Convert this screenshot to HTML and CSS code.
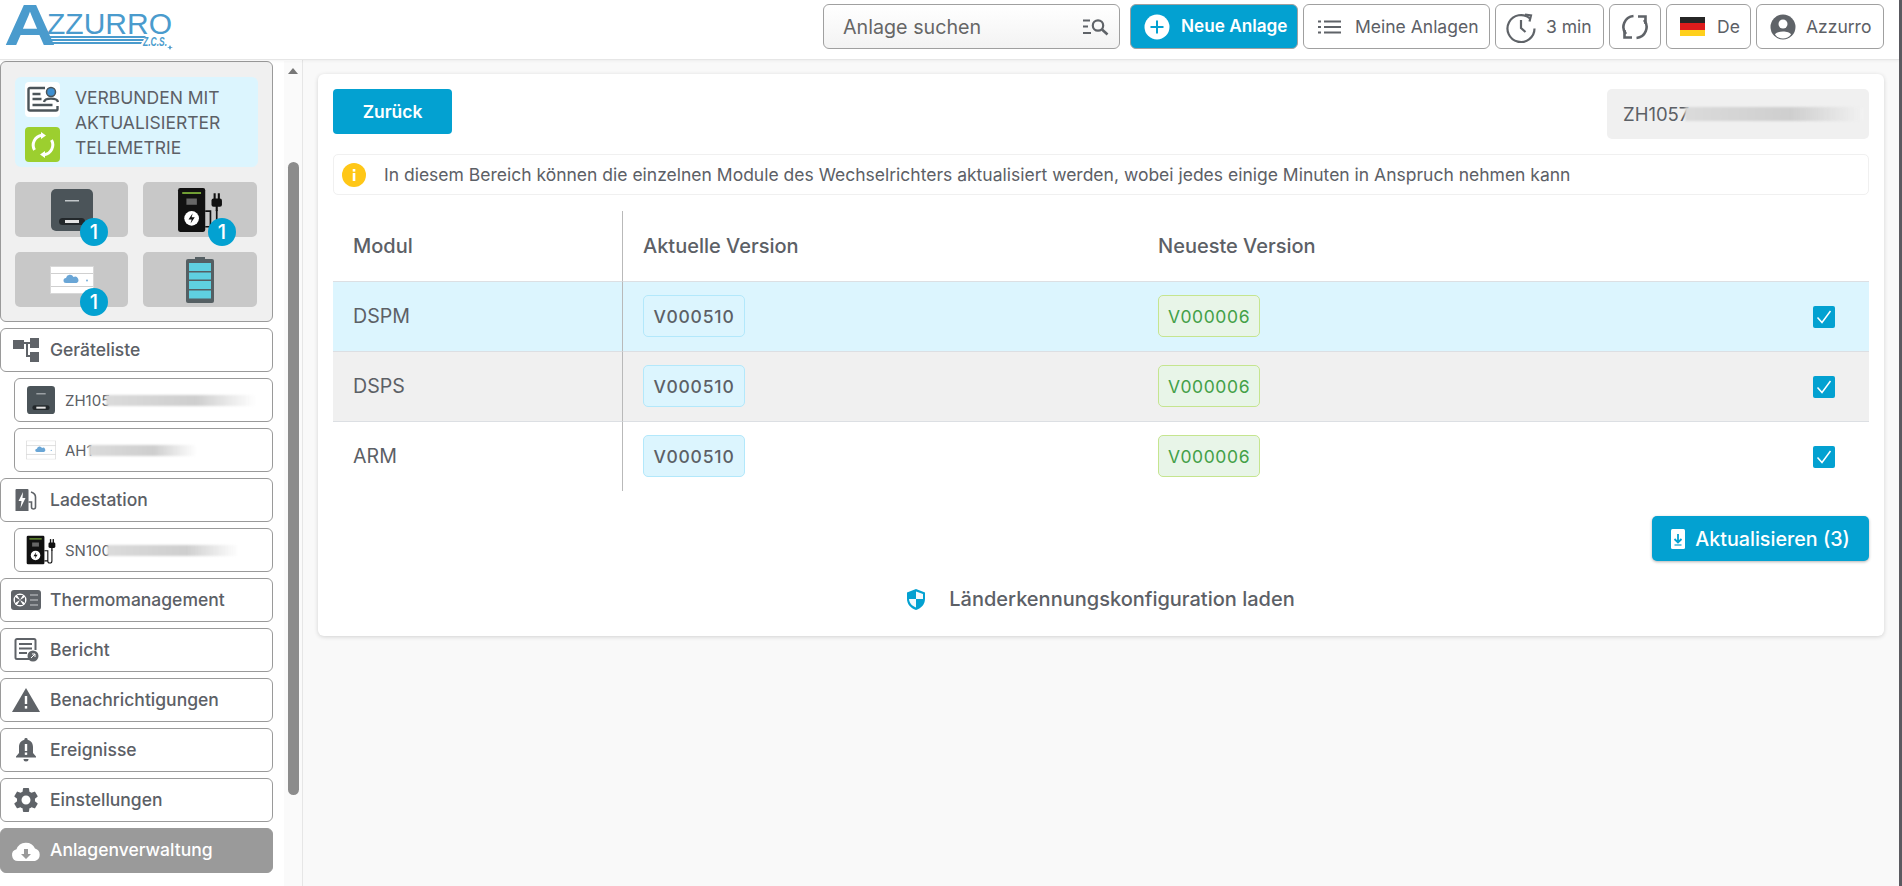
FILE: index.html
```html
<!DOCTYPE html>
<html lang="de">
<head>
    <meta charset="UTF-8">
    <meta name="viewport" content="width=device-width, initial-scale=1.0">
    <title>Azzurro - Anlagenverwaltung</title>
    <link rel="stylesheet" href="styles.css">
</head>
<body>
    <!-- shared device pictures -->
    <svg class="sprite" aria-hidden="true">
        <symbol id="dev-inverter" viewBox="0 0 42 42">
            <rect x="0" y="0" width="42" height="42" rx="5" fill="#4b5459"/>
            <rect x="14" y="11" width="14" height="1.500" fill="#c2c7ca"/>
            <rect x="8" y="29" width="26" height="7" rx="3.500" fill="#23282b"/>
            <rect x="14" y="31" width="14" height="3" fill="#e4e4e4"/>
        </symbol>
        <symbol id="dev-charger" viewBox="0 0 44 44">
            <rect x="1" y="1" width="26" height="42" rx="2" fill="#111"/>
            <rect x="5" y="5" width="18" height="1.500" fill="#8bc53f"/>
            <rect x="9" y="11" width="10" height="6" fill="#666"/>
            <circle cx="14" cy="30" r="7" fill="#fff"/>
            <polygon points="15,25 11,31 14,31 13,35 17,29 14,29" fill="#111"/>
            <path d="M27 23h5v15h-5M38 22v16a3 3 0 0 1-6 0" fill="none" stroke="#111" stroke-width="1.600"/>
            <rect x="33" y="11" width="10" height="8" rx="2" fill="#111"/>
            <rect x="35" y="6" width="2" height="6" fill="#111"/>
            <rect x="39" y="6" width="2" height="6" fill="#111"/>
            <rect x="37" y="18" width="2" height="5" fill="#111"/>
        </symbol>
        <symbol id="dev-box" viewBox="0 0 44 28">
            <rect x="0" y="0" width="44" height="28" fill="#fff"/>
            <path d="M0 7.500h44M0 20.500h44" stroke="#d0d0d0" stroke-width="1"/>
            <rect x=".5" y=".5" width="43" height="27" fill="none" stroke="#d8d8d8"/>
            <path d="M16 17a2.500 2.500 0 0 1 0-5 4 4 0 0 1 7.500-1 3 3 0 0 1 3 6z" fill="#6aa6d6"/>
            <circle cx="37" cy="14.500" r=".9" fill="#6aa6d6"/>
        </symbol>
    </svg>

    <div class="app">
        <header class="topbar">
            <svg class="logo" width="175" height="52" viewBox="0 0 175 52">
                <text class="logo-a" x="4" y="42" textLength="52" lengthAdjust="spacingAndGlyphs">A</text>
                <text class="logo-word" x="47" y="31" textLength="125" lengthAdjust="spacingAndGlyphs">ZZURRO</text>
                <polygon points="40,33 146,33 144,35 42,35" fill="#4a9bcd"/>
                <polygon points="46,36 144,36 143,38 47,38" fill="#4a9bcd"/>
                <polygon points="48,39 142,39 141,41 50,41" fill="#4a9bcd"/>
                <text class="logo-zcs" x="143" y="43" textLength="24" lengthAdjust="spacingAndGlyphs">Z.C.S.</text>
                <polygon points="170,42 171,44 173,44.500 171,45 170,47 169,45 167,44.500 169,44" fill="#4a9bcd"/>
            </svg>

            <div class="top-actions">
                <div class="search-box">
                    <span>Anlage suchen</span>
                    <svg width="26" height="18" viewBox="0 0 26 18"><path d="M0 2.500h7M0 8.500h5M0 15h8" stroke="#5f6368" stroke-width="2.200"/><circle cx="15" cy="7.500" r="5.200" fill="none" stroke="#5f6368" stroke-width="2.200"/><path d="M19 11.500l5.500 5" stroke="#5f6368" stroke-width="2.600"/></svg>
                </div>
                <button class="top-btn top-btn-primary">
                    <svg width="26" height="26" viewBox="0 0 26 26"><circle cx="13" cy="13" r="12.500" fill="#fff"/><path d="M13 6.500v13M6.500 13h13" stroke="#03a1d1" stroke-width="2"/></svg>
                    Neue Anlage
                </button>
                <button class="top-btn btn-plants">
                    <svg width="23" height="14" viewBox="0 0 23 14"><path d="M0 1.500h3M6 1.500h17M0 7h3M6 7h17M0 12.500h3M6 12.500h17" stroke="#5f6368" stroke-width="2"/></svg>
                    Meine Anlagen
                </button>
                <button class="top-btn btn-timer">
                    <svg width="30" height="32" viewBox="0 0 30 32"><path d="M24 7.500A13.500 13.500 0 1 0 28.500 17.500" fill="none" stroke="#5f6368" stroke-width="2.200"/><path d="M19 3.500l6 1-1.500 6" fill="none" stroke="#5f6368" stroke-width="2.200"/><path d="M15 9v8l4.500 4" fill="none" stroke="#5f6368" stroke-width="2.200"/></svg>
                    3 min
                </button>
                <button class="top-btn btn-sync">
                    <svg width="28" height="28" viewBox="0 0 28 28"><path d="M12.500 3A11 11 0 0 0 5 21M15.500 25A11 11 0 0 0 23 7" fill="none" stroke="#5f6368" stroke-width="2.600"/><path d="M3.500 17v7.500H11M24.500 11V3.500H17" fill="none" stroke="#5f6368" stroke-width="2.600"/></svg>
                </button>
                <button class="top-btn btn-lang">
                    <span class="flag"><i class="flag-black"></i><i class="flag-red"></i><i class="flag-gold"></i></span>
                    De
                </button>
                <button class="top-btn btn-user">
                    <svg width="26" height="26" viewBox="0 0 26 26"><circle cx="13" cy="13" r="12.500" fill="#5f6368"/><circle cx="13" cy="10" r="4.500" fill="#fff"/><path d="M5 20.500c1.500-4 14.500-4 16 0a10 10 0 0 1-16 0z" fill="#fff"/></svg>
                    Azzurro
                </button>
            </div>
        </header>

        <div class="layout">
            <aside class="sidebar">
                <nav class="side-col">
                    <section class="status-panel">
                        <div class="status-note">
                            <div class="status-icons">
                                <span class="status-icon status-icon-white">
                                    <svg width="32" height="30" viewBox="0 0 32 30"><path d="M18 3H3a1.500 1.500 0 0 0-1.500 1.500V24A1.500 1.500 0 0 0 3 25.500h26a1.500 1.500 0 0 0 1.500-1.500v-3" fill="none" stroke="#4b5459" stroke-width="2.400"/><path d="M5.500 9h8M5.500 14h9M5.500 20h20" stroke="#4b5459" stroke-width="2.600"/><circle cx="24" cy="7" r="4.500" fill="#3f8fd0" stroke="#4b5459" stroke-width="1.500"/><path d="M17 17c1-4.500 13-4.500 14 0" fill="none" stroke="#4b5459" stroke-width="2.400"/></svg>
                                </span>
                                <span class="status-icon status-icon-green">
                                    <svg width="24" height="26" viewBox="0 0 24 26"><path d="M3.500 18A10 10 0 0 1 11 3.200M20.500 8A10 10 0 0 1 13 22.800" fill="none" stroke="#fff" stroke-width="3"/><path d="M10 0l5 3.500L10 7zM14 19l-5 3.500 5 3.500z" fill="#fff"/></svg>
                                </span>
                            </div>
                            <p class="status-text">VERBUNDEN MIT AKTUALISIERTER TELEMETRIE</p>
                        </div>
                        <div class="tile-grid">
                            <div class="tile">
                                <svg width="42" height="42"><use href="#dev-inverter"/></svg>
                                <span class="count">1</span>
                            </div>
                            <div class="tile">
                                <svg width="46" height="46"><use href="#dev-charger"/></svg>
                                <span class="count">1</span>
                            </div>
                            <div class="tile">
                                <svg width="44" height="28"><use href="#dev-box"/></svg>
                                <span class="count">1</span>
                            </div>
                            <div class="tile">
                                <svg width="28" height="46" viewBox="0 0 28 46"><rect x="9" y="0" width="10" height="4" fill="#555f63"/><rect x="0" y="2" width="28" height="44" rx="2" fill="#555f63"/><rect x="3" y="6" width="22" height="8" fill="#5fd0e0"/><rect x="3" y="15.500" width="22" height="7" fill="#5fd0e0"/><rect x="3" y="24" width="22" height="8" fill="#5fd0e0"/><rect x="3" y="33.500" width="22" height="8" fill="#5fd0e0"/></svg>
                            </div>
                        </div>
                    </section>

                    <a class="nav-item">
                        <span class="nav-icon"><svg width="26" height="24" viewBox="0 0 26 24"><path d="M0 2h11v9H0zM17 0h9v10h-9zM17 14h9v10h-9z" fill="#5f6368"/><path d="M11 5h6M14 5v13h3" fill="none" stroke="#5f6368" stroke-width="2"/></svg></span>
                        <span>Geräteliste</span>
                    </a>
                    <a class="nav-item nav-sub">
                        <svg class="sub-icon" width="28" height="28"><use href="#dev-inverter"/></svg>
                        <span>ZH105</span><i class="smear smear-a"></i>
                    </a>
                    <a class="nav-item nav-sub">
                        <svg class="sub-icon" width="30" height="20" viewBox="0 0 44 28"><use href="#dev-box"/></svg>
                        <span>AH1</span><i class="smear smear-b"></i>
                    </a>
                    <a class="nav-item">
                        <span class="nav-icon"><svg width="22" height="24" viewBox="0 0 22 24"><path d="M1.500 1h11a1 1 0 0 1 1 1v21H.5V2a1 1 0 0 1 1-1z" fill="#5f6368"/><polygon points="8,4 3.500,13 6.500,13 5.500,20 10.500,10 7.500,10" fill="#fff"/><path d="M16 4c3 1 4.500 3 4.500 5v10a2 2 0 0 1-4 0v-5h-3" fill="none" stroke="#5f6368" stroke-width="1.600"/></svg></span>
                        <span>Ladestation</span>
                    </a>
                    <a class="nav-item nav-sub">
                        <svg class="sub-icon" width="30" height="30" viewBox="0 0 44 44"><use href="#dev-charger"/></svg>
                        <span>SN100</span><i class="smear smear-c"></i>
                    </a>
                    <a class="nav-item">
                        <span class="nav-icon"><svg width="30" height="20" viewBox="0 0 30 20"><rect width="30" height="20" rx="3" fill="#5f6368"/><circle cx="9" cy="10" r="6.500" fill="#fff"/><path d="M9 10L6 5h6zM9 10l-5 3v-6zM9 10l3 5H6zM9 10l5-3v6z" fill="#5f6368"/><path d="M19 5h8M19 10h8M19 15h8" stroke="#c9cccd" stroke-width="1.200"/></svg></span>
                        <span>Thermomanagement</span>
                    </a>
                    <a class="nav-item">
                        <span class="nav-icon"><svg width="25" height="24" viewBox="0 0 25 24"><path d="M16 21H3a1.500 1.500 0 0 1-1.500-1.500V2.500A1.500 1.500 0 0 1 3 1h17a1.500 1.500 0 0 1 1.500 1.500V12" fill="none" stroke="#5f6368" stroke-width="2"/><path d="M5 6h13M5 10.500h13M5 15h8" stroke="#5f6368" stroke-width="2"/><circle cx="19" cy="18" r="5.500" fill="#5f6368"/><path d="M17 20l4-4M18 16h3v3" fill="none" stroke="#fff"/></svg></span>
                        <span>Bericht</span>
                    </a>
                    <a class="nav-item">
                        <span class="nav-icon"><svg width="28" height="24" viewBox="0 0 28 24"><polygon points="14,0 28,24 0,24" fill="#5f6368"/><rect x="12.800" y="8" width="2.400" height="8" fill="#fff"/><rect x="12.800" y="18" width="2.400" height="2.600" fill="#fff"/></svg></span>
                        <span>Benachrichtigungen</span>
                    </a>
                    <a class="nav-item">
                        <span class="nav-icon"><svg width="20" height="24" viewBox="0 0 20 24"><path d="M10 0a1.600 1.600 0 0 1 1.600 1.800C15 2.600 17 5.500 17 9v6l3 3.500v1H0v-1L3 15V9c0-3.500 2-6.400 5.400-7.200A1.600 1.600 0 0 1 10 0z" fill="#5f6368"/><rect x="8.800" y="6" width="2.400" height="7" fill="#fff"/><rect x="8.800" y="14.500" width="2.400" height="2.400" fill="#fff"/><path d="M7.500 21h5a2.500 2.500 0 0 1-5 0z" fill="#5f6368"/></svg></span>
                        <span>Ereignisse</span>
                    </a>
                    <a class="nav-item">
                        <span class="nav-icon"><svg width="30" height="30" viewBox="0 0 24 24"><path fill="#5f6368" d="M19.140 12.940c.04-.3.060-.61.060-.94 0-.32-.02-.64-.07-.94l2.030-1.580a.49.490 0 0 0 .12-.61l-1.920-3.320a.488.488 0 0 0-.59-.22l-2.390.96c-.5-.38-1.030-.7-1.620-.94l-.36-2.540a.484.484 0 0 0-.48-.41h-3.840c-.24 0-.43.170-.47.410l-.36 2.540c-.59.240-1.130.570-1.620.94l-2.390-.96c-.22-.08-.47 0-.59.220L2.740 8.870c-.12.210-.08.470.12.610l2.030 1.580c-.05.300-.09.630-.09.940s.02.640.07.940l-2.030 1.580a.49.490 0 0 0-.12.610l1.920 3.320c.12.220.37.290.59.220l2.390-.96c.5.380 1.030.7 1.620.94l.36 2.540c.05.240.24.410.48.410h3.840c.24 0 .44-.17.470-.41l.36-2.540c.59-.24 1.130-.56 1.620-.94l2.390.96c.22.080.47 0 .59-.22l1.920-3.320c.12-.22.070-.47-.12-.61l-2.010-1.580zM12 15.600c-1.980 0-3.600-1.620-3.600-3.600s1.620-3.600 3.600-3.600 3.600 1.620 3.600 3.600-1.620 3.600-3.600 3.600z"/></svg></span>
                        <span>Einstellungen</span>
                    </a>
                    <a class="nav-item nav-active">
                        <span class="nav-icon"><svg width="30" height="22" viewBox="0 0 30 22"><path d="M7 21a6 6 0 0 1-1.500-11.800A10 10 0 0 1 24 8.500 6.500 6.500 0 0 1 24 21z" fill="#fff"/><path d="M13 9h4v5h3l-5 5-5-5h3z" fill="#9a9a9a"/></svg></span>
                        <span>Anlagenverwaltung</span>
                    </a>
                </nav>
                <div class="side-scroll">
                    <span class="scroll-arrow"></span>
                    <span class="scroll-thumb"></span>
                </div>
            </aside>

            <main class="content">
                <section class="card">
                    <div class="card-top">
                        <button class="btn-back">Zurück</button>
                        <div class="serial-box"><span>ZH1057</span><i class="smear smear-d"></i></div>
                    </div>
                    <div class="alert">
                        <svg width="24" height="24" viewBox="0 0 24 24"><circle cx="12" cy="12" r="12" fill="#ffc717"/><rect x="10.700" y="10" width="2.600" height="8" fill="#fff"/><rect x="10.700" y="6" width="2.600" height="2.600" fill="#fff"/></svg>
                        <span>In diesem Bereich können die einzelnen Module des Wechselrichters aktualisiert werden, wobei jedes einige Minuten in Anspruch nehmen kann</span>
                    </div>

                    <table class="fw-table">
                        <colgroup>
                            <col class="col-name"><col class="col-current"><col class="col-latest"><col>
                        </colgroup>
                        <thead>
                            <tr><th>Modul</th><th>Aktuelle Version</th><th>Neueste Version</th><th></th></tr>
                        </thead>
                        <tbody>
                            <tr class="row-selected">
                                <td>DSPM</td>
                                <td><span class="ver ver-current">V000510</span></td>
                                <td><span class="ver ver-latest">V000006</span></td>
                                <td class="cell-check"><span class="check"><svg width="16" height="14" viewBox="0 0 16 14"><path d="M1.500 7.500l4.500 5L14.500 1" fill="none" stroke="#fff" stroke-width="1.500"/></svg></span></td>
                            </tr>
                            <tr class="row-even">
                                <td>DSPS</td>
                                <td><span class="ver ver-current">V000510</span></td>
                                <td><span class="ver ver-latest">V000006</span></td>
                                <td class="cell-check"><span class="check"><svg width="16" height="14" viewBox="0 0 16 14"><path d="M1.500 7.500l4.500 5L14.500 1" fill="none" stroke="#fff" stroke-width="1.500"/></svg></span></td>
                            </tr>
                            <tr>
                                <td>ARM</td>
                                <td><span class="ver ver-current">V000510</span></td>
                                <td><span class="ver ver-latest">V000006</span></td>
                                <td class="cell-check"><span class="check"><svg width="16" height="14" viewBox="0 0 16 14"><path d="M1.500 7.500l4.500 5L14.500 1" fill="none" stroke="#fff" stroke-width="1.500"/></svg></span></td>
                            </tr>
                        </tbody>
                    </table>

                    <div class="update-row">
                        <button class="btn-update">
                            <svg width="14" height="20" viewBox="0 0 14 20"><rect width="14" height="20" rx="1.500" fill="#fff"/><path d="M7 5v8M3.500 10L7 13.500 10.500 10" fill="none" stroke="#03a1d1" stroke-width="1.800"/><path d="M3.500 16h7" stroke="#03a1d1" stroke-width="1.200"/></svg>
                            Aktualisieren (3)
                        </button>
                    </div>

                    <div class="country-link">
                        <svg width="18" height="21" viewBox="0 0 18 21"><path d="M9 0l9 3.500V10c0 5-3.500 9-9 11-5.500-2-9-6-9-11V3.500z" fill="#03a1d1"/><path d="M9 2.500V10H2c.3 4 3 7 7 8.500V10h7V5z" fill="#fff" opacity=".95"/></svg>
                        <span>Länderkennungskonfiguration laden</span>
                    </div>
                </section>
            </main>
        </div>
    </div>
    <div class="window-edge"></div>
</body>
</html>
```

FILE: styles.css
```css
* { box-sizing: border-box; }

html, body { height: 100%; }

body {
    margin: 0;
    display: flex;
    overflow: hidden;
    background: #fff;
    color: #5c6066;
    font-family: Inter, "Liberation Sans", sans-serif;
}

.sprite { display: none; }

.app {
    flex: 1;
    min-width: 0;
    display: flex;
    flex-direction: column;
}

.window-edge { width: 3px; background: #5a5a60; }

/* top bar */
.topbar {
    height: 60px;
    flex-shrink: 0;
    display: flex;
    align-items: flex-start;
    justify-content: space-between;
    padding: 0 15px 0 0;
    border-bottom: 1px solid #e6e6e6;
    box-shadow: 0 1px 3px rgba(0, 0, 0, 0.05);
    position: relative;
}

.logo { margin-top: 3px; overflow: visible; }
.logo-a { font: bold 58px "Liberation Sans", sans-serif; fill: #4a9bcd; }
.logo-word { font: 29px "Liberation Sans", sans-serif; fill: #4a9bcd; }
.logo-zcs { font: italic bold 13px "Liberation Sans", sans-serif; fill: #4a9bcd; }

.top-actions {
    display: flex;
    gap: 5px;
    padding-top: 4px;
}

.search-box {
    width: 297px;
    height: 45px;
    margin-right: 5px;
    padding: 0 10px 0 19px;
    display: flex;
    align-items: center;
    justify-content: space-between;
    font-size: 19.7px;
    color: #666;
    border: 1px solid #a0a0a0;
    border-radius: 6px;
    background: linear-gradient(#fff, #f3f3f3);
}

.top-btn {
    height: 45px;
    display: flex;
    align-items: center;
    border: 1px solid #a0a0a0;
    border-radius: 6px;
    background: #fff;
    color: #5c6066;
    font: 400 17.5px Inter, "Liberation Sans", sans-serif;
    white-space: nowrap;
}

.top-btn-primary {
    width: 168px;
    padding: 0 0 2px 13px;
    gap: 11px;
    background: #03a1d1;
    color: #fff;
    font-weight: 600;
    font-size: 17.2px;
}
.top-btn-primary svg { margin-top: 2px; }

.btn-plants { width: 187px; padding: 0 0 0 14px; gap: 14px; }
.btn-timer { width: 109px; padding: 0 0 0 10px; gap: 10px; }
.btn-sync { width: 52px; justify-content: center; padding: 0; }
.btn-lang { width: 85px; padding: 0 0 0 13px; gap: 12px; }
.btn-user { width: 128px; padding: 0 0 0 13px; gap: 10px; }

.flag { width: 25px; height: 19px; display: flex; flex-direction: column; }
.flag i { flex: 1; }
.flag-black { background: #262626; }
.flag-red { background: #dd1c1c; }
.flag-gold { background: #ffd01c; }

/* sidebar */
.layout { flex: 1; min-height: 0; display: flex; }

.sidebar {
    width: 303px;
    flex-shrink: 0;
    display: flex;
    gap: 11px;
    padding-top: 1px;
    border-right: 1px solid #e6e6e6;
    overflow: hidden;
}

.side-col {
    width: 273px;
    flex-shrink: 0;
    display: flex;
    flex-direction: column;
    gap: 6px;
}

.status-panel {
    height: 261px;
    padding: 15px 14px;
    background: #f0f0f0;
    border: 1px solid #9a9a9a;
    border-radius: 6px;
}

.status-note {
    height: 90px;
    padding: 5px 10px;
    display: flex;
    gap: 15px;
    background: #dcf5fe;
    border-radius: 6px;
}

.status-icons { display: flex; flex-direction: column; gap: 10px; }

.status-icon {
    width: 35px;
    height: 35px;
    display: flex;
    align-items: center;
    justify-content: center;
    border-radius: 4px;
}
.status-icon-white { background: #fff; }
.status-icon-green { background: #9ccf2f; }

.status-text {
    margin: 3px 0 0;
    font-size: 17.5px;
    line-height: 25px;
}

.tile-grid {
    margin-top: 15px;
    display: grid;
    grid-template-columns: 113px 114px;
    grid-auto-rows: 55px;
    gap: 15px;
}

.tile {
    position: relative;
    display: flex;
    align-items: center;
    justify-content: center;
    background: #c8c8c8;
    border-radius: 5px;
}

.count {
    position: absolute;
    left: 65px;
    top: 36px;
    width: 28px;
    height: 28px;
    display: flex;
    align-items: center;
    justify-content: center;
    background: #03a1d1;
    color: #fff;
    border-radius: 50%;
    font-size: 20px;
    font-weight: 500;
}

.nav-item {
    height: 44px;
    flex-shrink: 0;
    display: flex;
    align-items: center;
    padding-left: 8px;
    font-size: 17.5px;
    font-weight: 500;
    color: #5c6066;
    background: #fff;
    border: 1px solid #9a9a9a;
    border-radius: 6px;
}
.nav-item > span:last-child { padding-bottom: 2px; }

.nav-icon {
    width: 34px;
    margin-right: 7px;
    display: flex;
    justify-content: center;
}

.nav-sub {
    margin-left: 14px;
    padding-left: 11px;
    font-size: 15px;
    font-weight: 400;
}

.sub-icon { width: 30px; margin-right: 9px; }

.nav-active { height: 45px; background: #9a9a9a; border-color: #9a9a9a; color: #fff; }

.smear {
    height: 11px;
    flex-shrink: 0;
    background:
        repeating-linear-gradient(90deg, rgba(255, 255, 255, 0.35) 0 1px, transparent 1px 3px),
        linear-gradient(90deg, #d6d6d6, #c8c8c8 60%, rgba(215, 215, 215, 0));
    filter: blur(1.2px);
}
.smear-a { width: 150px; margin-left: -4px; }
.smear-b { width: 108px; margin-left: -4px; }
.smear-c { width: 132px; margin-left: -4px; }
.smear-d { width: 178px; height: 14px; margin-left: -4px; }

.side-scroll {
    width: 18px;
    flex-shrink: 0;
    display: flex;
    flex-direction: column;
    align-items: center;
    background: #fafafa;
}

.scroll-arrow {
    margin-top: 7px;
    border-left: 5px solid transparent;
    border-right: 5px solid transparent;
    border-bottom: 6px solid #777;
}

.scroll-thumb {
    width: 11px;
    height: 633px;
    margin-top: 88px;
    background: #8c8c8c;
    border-radius: 6px;
}

/* main card */
.content {
    flex: 1;
    min-width: 0;
    padding: 14px 15px;
    background: #f9f9f9;
}

.card {
    padding: 15px;
    background: #fff;
    border-radius: 6px;
    box-shadow: 0 1px 4px rgba(0, 0, 0, 0.16);
}

.card-top {
    display: flex;
    justify-content: space-between;
    align-items: flex-start;
}

.btn-back {
    width: 119px;
    height: 45px;
    border: none;
    border-radius: 4px;
    background: #03a1d1;
    color: #fff;
    font: 600 17.4px Inter, "Liberation Sans", sans-serif;
}

.serial-box {
    width: 262px;
    height: 50px;
    padding-left: 16px;
    display: flex;
    align-items: center;
    background: #f0f0f0;
    border-radius: 5px;
    font-size: 18.5px;
}

.alert {
    height: 41px;
    margin-top: 15px;
    padding-left: 8px;
    display: flex;
    align-items: center;
    gap: 18px;
    border: 1px solid #f0f0f0;
    border-radius: 5px;
    font-size: 17.5px;
}

.fw-table {
    width: 100%;
    margin-top: 16px;
    border-collapse: separate;
    border-spacing: 0;
    table-layout: fixed;
}

.col-name { width: 290px; }
.col-current { width: 515px; }
.col-latest { width: 600px; }

.fw-table th, .fw-table td {
    height: 70px;
    padding: 0 0 0 20px;
    text-align: left;
    font-size: 19.6px;
    color: #5c6066;
}

.fw-table th { font-weight: 500; font-size: 20px; }
.fw-table td { font-weight: 400; border-top: 1px solid #dcdfe3; padding-bottom: 1px; }
.fw-table th:first-child, .fw-table td:first-child { padding-left: 20px; border-right: 1px solid #b9b9b9; }

.row-selected td { background: #dcf5fe; }
.row-even td { background: #f0f0f0; }

.ver {
    display: inline-flex;
    align-items: center;
    justify-content: center;
    width: 102px;
    height: 42px;
    border: 1px solid;
    border-radius: 5px;
    font-size: 17.5px;
    font-weight: 500;
    letter-spacing: 0.8px;
    vertical-align: middle;
}
.ver-current { background: #dcf5fe; border-color: #b3e8fb; }
.ver-latest { background: #e8f5e8; border-color: #c5e58f; color: #43a047; font-weight: 400; letter-spacing: 0.6px; }

.fw-table td.cell-check { padding: 0 34px 2px 0; text-align: right; }

.check {
    display: inline-flex;
    align-items: center;
    justify-content: center;
    width: 22px;
    height: 22px;
    background: #03a1d1;
    border-radius: 2px;
    vertical-align: middle;
}

.update-row {
    margin-top: 25px;
    display: flex;
    justify-content: flex-end;
}

.btn-update {
    width: 217px;
    height: 45px;
    display: flex;
    align-items: center;
    justify-content: center;
    gap: 10px;
    border: none;
    border-radius: 5px;
    background: #03a1d1;
    color: #fff;
    font: 500 19.7px Inter, "Liberation Sans", sans-serif;
    box-shadow: 0 1px 3px rgba(0, 0, 0, 0.3);
}

.country-link {
    height: 44px;
    margin-top: 16px;
    display: flex;
    align-items: center;
    justify-content: center;
    gap: 24px;
    font-size: 20px;
    font-weight: 500;
}
```
